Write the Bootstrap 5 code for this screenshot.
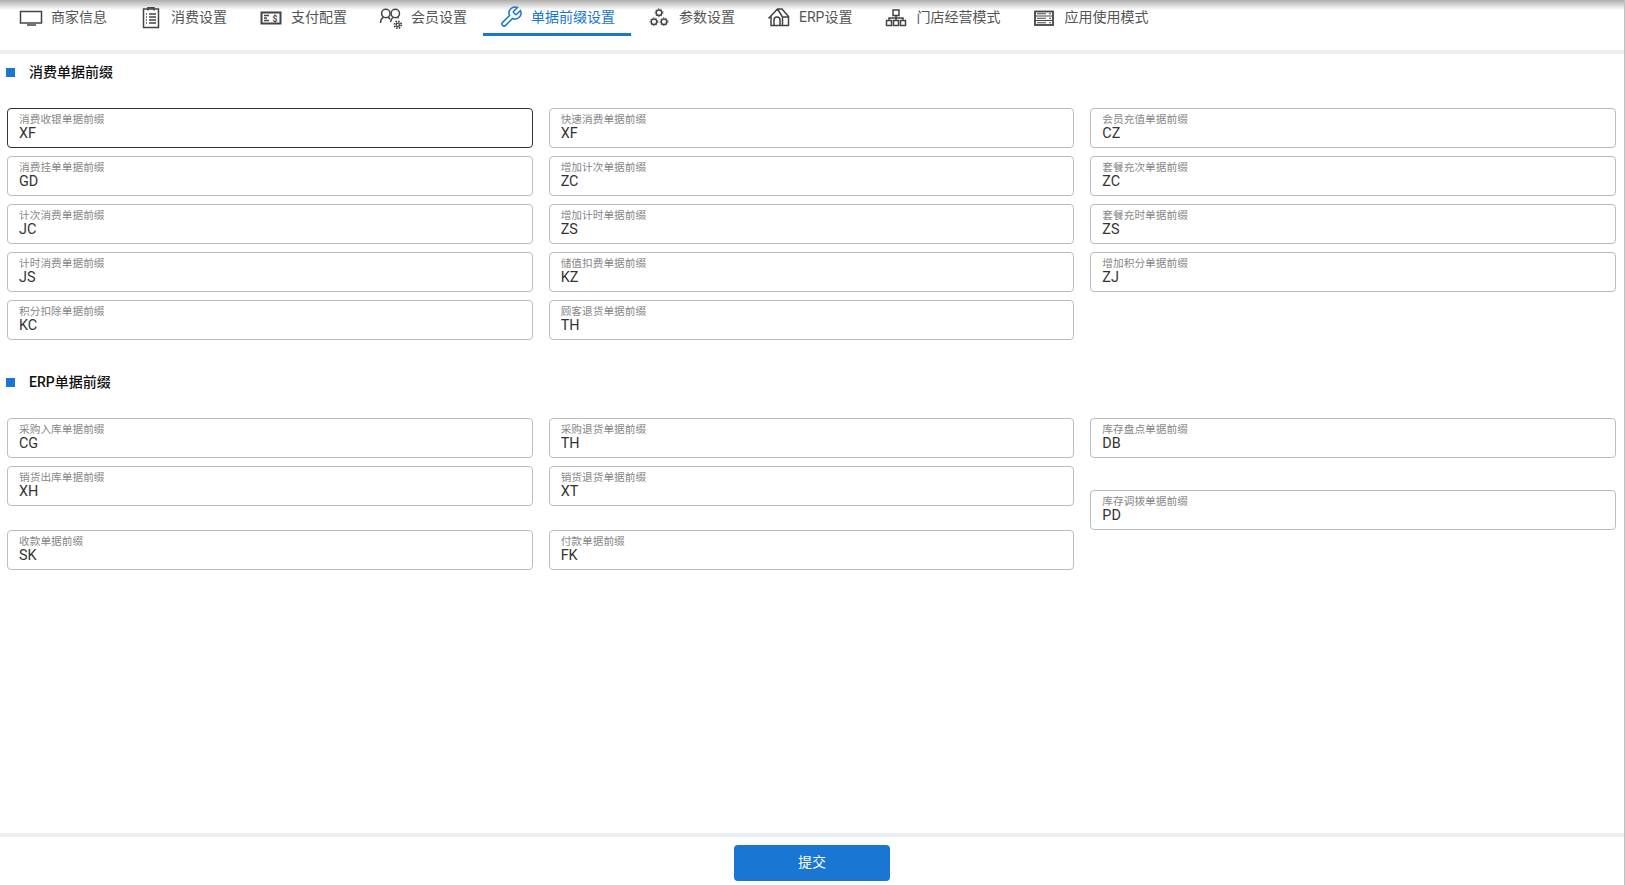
<!DOCTYPE html>
<html lang="zh-CN">
<head>
  <meta charset="UTF-8" />
  <title>单据前缀设置</title>
  <link href="https://cdn.jsdelivr.net/npm/bootstrap@5.3.0/dist/css/bootstrap.min.css" rel="stylesheet" />
  <style>
    body {
      font-family: Roboto, "Noto Sans CJK SC", sans-serif;
      font-size: 14px;
      overflow: hidden;
      background: #fff;
    }
    .page-wrap {
      height: 885px;
      border-right: 1px solid #c0c0c0;
    }
    .tab-bar {
      height: 54px;
      padding-left: 3px;
      border-bottom: 4px solid #eceff1;
      background: linear-gradient(#adadad, #fff 10px);
    }
    .tab-item {
      height: 36px;
      padding: 1px 16px 0;
      color: #555;
      border-bottom: 3px solid transparent;
      text-decoration: none;
    }
    .tab-item svg {
      width: 24px;
      height: 24px;
      margin-right: 8px;
      fill: none;
      stroke: #444;
      stroke-width: 1.5;
    }
    .tab-item.tab-on {
      color: #1976d2;
      border-bottom-color: #1976d2;
    }
    .tab-item.tab-on svg {
      stroke: #1976d2;
    }
    .form-area {
      padding: 8px 8px 0 7px;
    }
    .sec-title {
      height: 20px;
      margin: 0 0 26px;
      font-size: 14px;
      font-weight: 500;
      color: #111;
      line-height: 20px;
    }
    .sec-title::before {
      content: "";
      width: 9px;
      height: 9px;
      margin: 0 14px 0 -1px;
      background: #1976d2;
    }
    .sec-gap {
      margin-top: 24px;
    }
    .prefix-box {
      height: 40px;
      margin-bottom: 8px;
      padding: 5px 11px 0;
      border: 1px solid #bdbdbd;
      border-radius: 4px;
    }
    .prefix-box.box-focus {
      border-color: #333;
    }
    .prefix-box label {
      display: block;
      font-size: 10.7px;
      line-height: 11px;
      color: #888;
    }
    .prefix-box input {
      display: block;
      width: 100%;
      height: 18px;
      padding: 0;
      border: 0;
      outline: 0;
      font-size: 14.4px;
      color: #333;
      background: transparent;
    }
    .box-after-gap {
      margin-top: 24px;
    }
    .box-pd {
      margin-top: 32px;
    }
    .foot-bar {
      height: 52px;
      padding-top: 8px;
      border-top: 4px solid #eceff1;
    }
    .btn-submit {
      width: 156px;
      height: 36px;
      padding: 0 0 2px;
      font-size: 14px;
      color: #fff;
      background: #1976d2;
      border: 0;
      border-radius: 4px;
    }
  </style>
</head>
<body>
<div class="page-wrap d-flex flex-column">
  <nav class="tab-bar d-flex align-items-start">
    <a class="tab-item d-flex align-items-center" href="#">
      <svg viewBox="0 0 24 24"><rect x="1.500" y="6.500" width="21" height="11.500"/><path d="M8 20h9"/></svg>商家信息
    </a>
    <a class="tab-item d-flex align-items-center" href="#">
      <svg viewBox="0 0 24 24"><rect x="4.500" y="4" width="15" height="18.500"/><path d="M9 5.500V2.800h6v2.700M7 9h1M10 9h7M7 12h1M10 12h7M7 15h1M10 15h7M7 18h1M10 18h7"/></svg>消费设置
    </a>
    <a class="tab-item d-flex align-items-center" href="#">
      <svg viewBox="0 0 24 24"><rect x="2.500" y="7.500" width="19" height="11" stroke-width="2"/><path d="M5 10.500h5M5 13h3M5 15.500h5"/><text x="13.500" y="16.500" font-size="8.500" font-weight="700" fill="#444" stroke="none">$</text></svg>支付配置
    </a>
    <a class="tab-item d-flex align-items-center" href="#">
      <svg viewBox="0 0 24 24"><circle cx="6.800" cy="8.500" r="4.200"/><path d="M1.500 18c.2-3 1.200-5 3-5.500M9 12.500c1 .3 1.700 1 2.200 2"/><circle cx="16.300" cy="8.500" r="4.200"/><path d="M11.500 17c.5-2 1.200-3.500 2.500-4.500M18.500 12.500c.5.100.8.300 1.200.600"/><circle cx="18.800" cy="19.800" r="1.700" stroke-width="1.300"/><circle cx="18.800" cy="19.800" r="3.400" stroke-width="1.800" stroke-dasharray="1.500 1.170"/></svg>会员设置
    </a>
    <a class="tab-item tab-on d-flex align-items-center" href="#">
      <svg viewBox="0 0 24 24"><path d="M14.700 6.300a1 1 0 0 0 0 1.400l1.600 1.600a1 1 0 0 0 1.400 0l3.770-3.770a6 6 0 0 1-7.940 7.940l-6.910 6.910a2.120 2.120 0 0 1-3-3l6.910-6.910a6 6 0 0 1 7.940-7.940l-3.760 3.760z"/></svg>单据前缀设置
    </a>
    <a class="tab-item d-flex align-items-center" href="#">
      <svg viewBox="0 0 24 24"><circle cx="12" cy="7.700" r="2.800"/><circle cx="7" cy="16.700" r="2.800"/><circle cx="17" cy="16.700" r="2.800"/><g stroke-width="1" stroke-dasharray="1.200 1.600"><circle cx="12" cy="7.700" r="3.900"/><circle cx="7" cy="16.700" r="3.900"/><circle cx="17" cy="16.700" r="3.900"/></g></svg>参数设置
    </a>
    <a class="tab-item d-flex align-items-center" href="#">
      <svg viewBox="0 0 24 24"><path d="M1.500 13.500 10.500 4h4.500l7 8M10.500 4l5 8v8.500M15.500 12H22M4 11v9.500h17.500V12M7 20.500V15a3 3 0 0 1 6 0v5.500"/></svg>ERP设置
    </a>
    <a class="tab-item d-flex align-items-center" href="#">
      <svg viewBox="0 0 24 24" stroke-width="1.700"><rect x="9" y="5" width="6" height="5.500"/><rect x="2.500" y="15.500" width="5" height="5"/><rect x="9.500" y="15.500" width="5" height="5"/><rect x="16.500" y="15.500" width="5" height="5"/><path d="M12 10.500v5M5 15.500V13h14v2.500"/></svg>门店经营模式
    </a>
    <a class="tab-item d-flex align-items-center" href="#">
      <svg viewBox="0 0 24 24"><rect x="3" y="6.500" width="18" height="13.500" stroke-width="1.800"/><path d="M3 11h18M3 15.500h18M5 8.800h9M5 13.200h9M5 17.800h9M17 8.800h2M17 13.200h2M17 17.800h2" stroke-width="1.100"/></svg>应用使用模式
    </a>
  </nav>

  <main class="form-area flex-grow-1">
    <h2 class="sec-title d-flex align-items-center">消费单据前缀</h2>
    <div class="row gx-3">
      <div class="col-4" id="sale1"></div>
      <div class="col-4" id="sale2"></div>
      <div class="col-4" id="sale3"></div>
    </div>

    <h2 class="sec-title sec-gap d-flex align-items-center">ERP单据前缀</h2>
    <div class="row gx-3">
      <div class="col-4" id="erp1"></div>
      <div class="col-4" id="erp2"></div>
      <div class="col-4" id="erp3"></div>
    </div>
  </main>

  <footer class="foot-bar d-flex justify-content-center">
    <button class="btn-submit" type="button">提交</button>
  </footer>
</div>

<script>
  const colunas = {
    sale1: [["消费收银单据前缀", "XF", "box-focus"], ["消费挂单单据前缀", "GD"], ["计次消费单据前缀", "JC"], ["计时消费单据前缀", "JS"], ["积分扣除单据前缀", "KC"]],
    sale2: [["快速消费单据前缀", "XF"], ["增加计次单据前缀", "ZC"], ["增加计时单据前缀", "ZS"], ["储值扣费单据前缀", "KZ"], ["顾客退货单据前缀", "TH"]],
    sale3: [["会员充值单据前缀", "CZ"], ["套餐充次单据前缀", "ZC"], ["套餐充时单据前缀", "ZS"], ["增加积分单据前缀", "ZJ"]],
    erp1: [["采购入库单据前缀", "CG"], ["销货出库单据前缀", "XH"], ["收款单据前缀", "SK", "box-after-gap"]],
    erp2: [["采购退货单据前缀", "TH"], ["销货退货单据前缀", "XT"], ["付款单据前缀", "FK", "box-after-gap"]],
    erp3: [["库存盘点单据前缀", "DB"], ["库存调拨单据前缀", "PD", "box-pd"]]
  };

  Object.keys(colunas).forEach(id => {
    const col = document.getElementById(id);
    colunas[id].forEach(c => {
      const box = document.createElement("div");
      box.className = "prefix-box " + (c[2] || "");
      box.innerHTML = `<label>${c[0]}</label><input type="text" value="${c[1]}" />`;
      col.appendChild(box);
    });
  });
</script>
<script src="https://cdn.jsdelivr.net/npm/bootstrap@5.3.0/dist/js/bootstrap.bundle.min.js"></script>
</body>
</html>
